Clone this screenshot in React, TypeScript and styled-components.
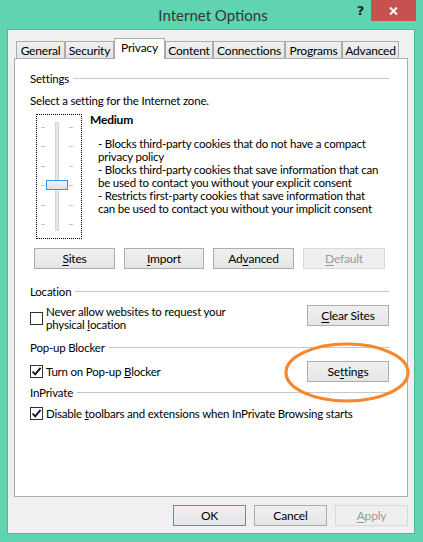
import React from "react";
import styled, { createGlobalStyle } from "styled-components";

const Global = createGlobalStyle`
  html, body { margin: 0; padding: 0; background: #60d3b0; }
  * { box-sizing: border-box; }
`;

const FONT = `Lato, "Noto Sans", sans-serif`;

const Window = styled.div`
  width: 423px;
  height: 542px;
  background: #60d3b0;
  display: flex;
  flex-direction: column;
  padding: 0 8px 8px 7px;
  font-family: ${FONT};
  font-size: 11.5px;
  letter-spacing: -0.2px;
  color: #000;
`;

const TitleBar = styled.div`
  height: 29px;
  display: grid;
  grid-template-columns: 1fr auto 1fr;
  align-items: start;
`;

const Title = styled.div`
  grid-column: 2;
  font-size: 15px;
  letter-spacing: 0;
  line-height: 30px;
  color: #2d3a36;
  margin-left: 4px;
`;

const Controls = styled.div`
  grid-column: 3;
  justify-self: end;
  display: flex;
  align-items: flex-start;
  margin-right: -1px;
`;

const Help = styled.div`
  font-family: "DejaVu Sans", sans-serif;
  font-weight: bold;
  font-size: 13px;
  line-height: 22px;
  color: #222;
  margin-right: 7px;
`;

const CloseBtn = styled.div`
  width: 45px;
  height: 21px;
  background: #c75050;
  display: flex;
  align-items: center;
  justify-content: center;
`;

const Client = styled.div`
  flex: 1;
  border: 1px solid #4fb797;
  background: #f0f0f0;
  display: flex;
  flex-direction: column;
  padding: 8px 6px 7px 6px;
`;

const TabStrip = styled.div`
  height: 20px;
  display: flex;
  align-items: flex-end;
  padding-left: 2px;
  position: relative;
  z-index: 1;
`;

const Tab = styled.div<{ $w: number; $active?: boolean }>`
  width: ${(p) => p.$w}px;
  height: ${(p) => (p.$active ? 21 : 17)}px;
  margin-bottom: ${(p) => (p.$active ? -1 : 0)}px;
  border: 1px solid #acacac;
  border-bottom: none;
  background: ${(p) => (p.$active ? "#fff" : "linear-gradient(#f0f0f0, #e5e5e5)")};
  display: flex;
  align-items: center;
  justify-content: center;
  font-size: 12px;
  line-height: 15px;
  padding-bottom: ${(p) => (p.$active ? 3 : 0)}px;
`;

const Panel = styled.div`
  height: 439px;
  border: 1px solid #acacac;
  background: #fff;
  padding: 12px 18px 0 15px;
  display: flex;
  flex-direction: column;
`;

const GroupHeader = styled.div<{ $mt: number }>`
  margin-top: ${(p) => p.$mt}px;
  display: flex;
  align-items: center;
  gap: 4px;
  height: 15px;
  line-height: 15px;
  white-space: nowrap;
  &::after {
    content: "";
    flex: 1;
    height: 1px;
    background: #c8c8c8;
  }
`;

const Line = styled.div<{ $mt: number }>`
  margin-top: ${(p) => p.$mt}px;
  line-height: 15px;
  white-space: nowrap;
`;

const SliderRow = styled.div`
  margin-top: 4px;
  display: flex;
  align-items: flex-start;
`;

const SliderBox = styled.div`
  width: 46px;
  height: 125px;
  margin: 2px 8px 0 6px;
  border: 1px dotted #000;
  flex: none;
`;

const LevelText = styled.div`
  display: flex;
  flex-direction: column;
`;

const LevelName = styled.div`
  font-weight: bold;
  font-size: 12px;
  line-height: 15px;
`;

const Description = styled.div`
  margin-top: 10px;
  padding-left: 8px;
  line-height: 13px;
  white-space: nowrap;
`;

const ButtonRow = styled.div`
  margin-top: 9px;
  margin-left: 4px;
  display: flex;
  gap: 9px;
`;

const Button = styled.div<{ $w: number; $disabled?: boolean; $default?: boolean }>`
  width: ${(p) => p.$w}px;
  height: 21px;
  flex: none;
  border: 1px solid
    ${(p) => (p.$disabled ? "#d9d9d9" : p.$default ? "#3c93e8" : "#acacac")};
  background: ${(p) =>
    p.$disabled ? "#efefef" : "linear-gradient(#f0f0f0, #e5e5e5)"};
  color: ${(p) => (p.$disabled ? "#9a9a9a" : "#000")};
  display: flex;
  align-items: center;
  justify-content: center;
  font-size: 12px;
  line-height: 15px;
  u {
    text-decoration-thickness: 1px;
    text-underline-offset: 2px;
  }
`;

const OptionRow = styled.div<{ $mt: number; $align?: string }>`
  margin-top: ${(p) => p.$mt}px;
  display: flex;
  align-items: ${(p) => p.$align || "center"};
  justify-content: space-between;
`;

const CheckLabel = styled.div`
  display: flex;
  align-items: center;
  gap: 3px;
`;

const LabelText = styled.div<{ $lh: number }>`
  line-height: ${(p) => p.$lh}px;
  white-space: nowrap;
`;

const Box = styled.div`
  width: 13px;
  height: 13px;
  border: 1px solid #333;
  background: #fff;
  flex: none;
  display: flex;
  align-items: center;
  justify-content: center;
`;

const Highlight = styled.div`
  position: relative;
`;

const Ellipse = styled.svg`
  position: absolute;
  left: -23px;
  top: -19px;
  pointer-events: none;
  overflow: visible;
`;

const Footer = styled.div`
  margin-top: 8px;
  display: flex;
  justify-content: flex-end;
  gap: 8px;
`;

function Checkbox({ checked }: { checked?: boolean }) {
  return (
    <Box>
      {checked && (
        <svg width="11" height="11" viewBox="0 0 11 11">
          <path d="M1.5 5.5 L4.2 8.3 L9.6 1.8" fill="none" stroke="#111" strokeWidth="1.8" />
        </svg>
      )}
    </Box>
  );
}

function Slider() {
  const ticks = [12, 31, 51, 70, 90, 109];
  return (
    <SliderBox>
      <svg width="44" height="123" viewBox="0 0 44 123">
        <rect x="18.5" y="7.5" width="3" height="108" fill="#e8e8e8" stroke="#d4d4d4" />
        {ticks.map((y) => (
          <g key={y}>
            <rect x="4" y={y} width="4" height="1" fill="#c4c4c4" />
            <rect x="32" y={y} width="4" height="1" fill="#c4c4c4" />
          </g>
        ))}
        <defs>
          <linearGradient id="th" x1="0" y1="0" x2="0" y2="1">
            <stop offset="0" stopColor="#f4f4f4" />
            <stop offset="1" stopColor="#dedede" />
          </linearGradient>
        </defs>
        <rect x="9.5" y="65.5" width="21" height="9" fill="url(#th)" stroke="#3c93e8" />
      </svg>
    </SliderBox>
  );
}

const tabs: [string, number][] = [
  ["General", 49],
  ["Security", 49],
  ["Privacy", 51],
  ["Content", 48],
  ["Connections", 72],
  ["Programs", 57],
  ["Advanced", 57],
];

export default function App() {
  return (
    <>
      <Global />
      <Window>
        <TitleBar>
          <Title>Internet Options</Title>
          <Controls>
            <Help>?</Help>
            <CloseBtn>
              <svg width="9" height="8" viewBox="0 0 9 8">
                <path d="M1 0.5 L8 7.5 M8 0.5 L1 7.5" stroke="#fff" strokeWidth="2" />
              </svg>
            </CloseBtn>
          </Controls>
        </TitleBar>
        <Client>
          <TabStrip>
            {tabs.map(([name, w]) => (
              <Tab key={name} $w={w} $active={name === "Privacy"}>
                {name}
              </Tab>
            ))}
          </TabStrip>
          <Panel>
            <GroupHeader $mt={0}>Settings</GroupHeader>
            <Line $mt={7}>Select a setting for the Internet zone.</Line>
            <SliderRow>
              <Slider />
              <LevelText>
                <LevelName>Medium</LevelName>
                <Description>
                  - Blocks third-party cookies that do not have a compact
                  <br />
                  privacy policy
                  <br />
                  - Blocks third-party cookies that save information that can
                  <br />
                  be used to contact you without your explicit consent
                  <br />
                  - Restricts first-party cookies that save information that
                  <br />
                  can be used to contact you without your implicit consent
                </Description>
              </LevelText>
            </SliderRow>
            <ButtonRow>
              <Button $w={81}>
                <span><u>S</u>ites</span>
              </Button>
              <Button $w={80}>
                <span><u>I</u>mport</span>
              </Button>
              <Button $w={81}>
                <span>Ad<u>v</u>anced</span>
              </Button>
              <Button $w={82} $disabled>
                <span><u>D</u>efault</span>
              </Button>
            </ButtonRow>

            <GroupHeader $mt={15}>Location</GroupHeader>
            <OptionRow $mt={6} $align="flex-start">
              <CheckLabel>
                <Checkbox />
                <LabelText $lh={13}>
                  Never allow websites to request your
                  <br />
                  physical <u>l</u>ocation
                </LabelText>
              </CheckLabel>
              <Button $w={82}>
                <span><u>C</u>lear Sites</span>
              </Button>
            </OptionRow>

            <GroupHeader $mt={9}>Pop-up Blocker</GroupHeader>
            <OptionRow $mt={6}>
              <CheckLabel>
                <Checkbox checked />
                <LabelText $lh={15}>
                  Turn on Pop-up <u>B</u>locker
                </LabelText>
              </CheckLabel>
              <Highlight>
                <Button $w={82}>
                  <span>Se<u>t</u>tings</span>
                </Button>
                <Ellipse width="126" height="61" viewBox="0 0 126 61">
                  <ellipse cx="63" cy="30.5" rx="61" ry="28.5" fill="none" stroke="#f7872a" strokeWidth="3.2" />
                </Ellipse>
              </Highlight>
            </OptionRow>

            <GroupHeader $mt={3}>InPrivate</GroupHeader>
            <OptionRow $mt={6}>
              <CheckLabel>
                <Checkbox checked />
                <LabelText $lh={15}>
                  Disable <u>t</u>oolbars and extensions when InPrivate Browsing starts
                </LabelText>
              </CheckLabel>
            </OptionRow>
          </Panel>
          <Footer>
            <Button $w={73} $default>OK</Button>
            <Button $w={73}>Cancel</Button>
            <Button $w={73} $disabled>
              <span><u>A</u>pply</span>
            </Button>
          </Footer>
        </Client>
      </Window>
    </>
  );
}
